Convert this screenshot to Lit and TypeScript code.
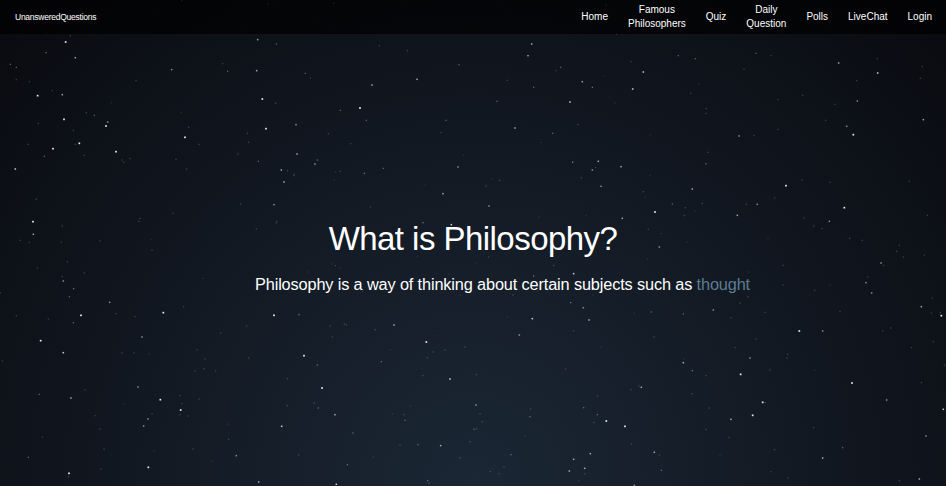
import { LitElement, html, svg, css } from "lit";
import { customElement } from "lit/decorators.js";

// Star clusters: [offsetX, offsetY, [x, y, brightness 1-9, ...]] with coordinates in thirds of a pixel.
const FIELD: [number, number, number[]][] = [
  [0, 0, [545,2,3,803,11,4,829,12,1,459,41,1,665,92,1,671,98,1,142,98,1,724,96,1,211,107,2,197,126,9,138,158,4,226,173,6,31,193,3,49,202,3,49,239,2,88,245,2,157,272,2,113,287,9,187,284,6,334,308,1,192,358,9,259,338,2,283,346,3,115,370,2,323,366,5,318,378,8,220,391,2,238,430,9,226,433,2,85,433,2,159,446,8,133,469,3,253,466,2,348,455,9,366,480,2,372,487,2,390,476,2,528,478,2,515,209,5,408,242,2,668,191,2,683,214,3,770,212,6,773,119,6,829,132,3,916,220,3,931,234,2,787,297,9,827,310,2,543,338,1,566,382,2,555,412,9,597,433,2,798,386,8,742,400,2,746,427,2,888,374,5,891,462,6,713,462,2,775,484,3,945,492,5,952,480,2,787,2,1]],
  [315, 0, [57,10,4,271,17,1,14,50,1,40,86,1,363,92,1,575,35,1,553,4,1,873,15,4,904,102,2,650,132,6,639,167,6,193,137,2,277,152,2,432,194,3,737,202,3,723,212,2,577,241,2,656,262,3,802,245,6,832,262,4,867,228,1,948,185,1,306,238,6,171,255,6,135,324,9,76,331,3,154,361,3,546,304,3,765,306,7,900,309,1,393,361,3,378,398,2,600,384,6,713,400,3,789,374,2,678,428,1,40,401,2,107,431,2,445,466,1,7,480,2,773,487,3,850,484,5]],
  [630, 0, [211,18,1,613,78,1,594,80,1,145,167,3,196,176,3,378,160,3,423,167,2,342,208,2,3,185,1,40,216,7,8,267,7,207,251,1,182,280,2,626,189,6,742,176,2,743,219,7,680,242,2,877,200,2,871,235,2,518,286,2,444,299,2,615,313,2,682,303,5,229,326,2,228,340,2,587,361,2,650,379,5,670,404,9,880,359,6,444,388,2,327,408,5,372,406,2,60,404,1,235,457,2,228,491,2]],
  [0, 160, [46,27,7,560,27,2,109,118,2,99,185,9,100,223,6,187,198,2,61,241,2,88,247,2,184,246,2,300,243,2,420,175,2,417,184,2,519,160,2,722,132,2,822,134,5,844,30,6,862,32,2,883,43,2,881,47,2,852,66,6,831,184,2,829,189,2,769,207,2,453,238,1,456,270,2,202,305,2,112,324,2,187,350,2,190,363,5,253,339,2,221,386,4,208,410,3,1,399,2,608,355,1,925,336,1,49,467,2,145,477,2,243,466,8,220,488,2,329,427,5,348,461,2,405,470,2,490,458,9,551,440,2,822,466,8,897,464,4]],
  [315, 160, [61,37,1,76,34,2,58,61,1,148,40,4,205,25,3,429,21,5,331,76,1,384,101,6,166,141,2,531,56,1,554,61,2,513,78,2,522,138,5,324,188,4,145,195,2,409,194,7,799,53,2,832,30,5,842,23,2,850,4,3,773,6,2,918,20,6,858,79,5,922,175,6,813,166,1,672,171,1,292,235,1,307,289,1,521,291,2,484,308,1,49,312,1,61,317,2,76,323,1,402,342,1,656,348,4,776,341,7,716,316,2,594,405,2,668,393,1,834,405,1,436,405,1,142,395,1,767,428,4,805,443,5,822,480,6,652,476,7,576,471,1]],
  [630, 160, [228,12,2,60,46,1,40,95,2,46,112,1,187,87,6,127,132,3,217,130,2,166,143,2,195,153,1,163,167,2,75,156,8,55,208,2,94,221,1,88,261,5,171,246,1,53,297,1,322,166,6,349,133,2,382,133,5,434,114,2,468,77,8,516,60,2,600,67,2,838,64,2,522,174,2,551,198,2,576,206,2,598,184,5,643,143,9,892,166,2,414,234,1,659,235,2,697,241,2,459,316,2,808,256,2,800,274,2,820,291,2,883,285,2,753,309,5,761,316,2,713,351,2,708,368,5,725,399,5,459,375,2,554,391,2,600,376,1,357,336,1,354,410,2,330,429,2,250,450,5,64,456,3,12,460,1,160,462,3,303,473,2,405,457,2,630,454,2,874,440,6,907,414,2,904,459,2,934,467,9,931,458,2]],
  [0, 321, [220,6,2,122,59,9,190,95,7,7,120,2,366,96,2,402,96,2,447,99,1,426,48,5,740,15,2,662,36,2,591,87,2,615,114,2,612,143,2,585,150,2,647,150,2,746,111,2,912,104,9,862,173,2,952,132,2,118,220,3,255,207,2,213,231,6,414,198,5,481,236,9,372,249,1,540,224,2,546,248,2,597,234,2,542,267,8,456,278,2,540,281,2,564,285,2,444,294,5,431,315,5,285,284,2,300,324,2,862,254,2,943,246,2,955,261,2,845,316,7,686,309,1,127,348,2,312,384,2,85,409,3,686,355,2,579,384,2,462,390,1,709,404,5,896,402,2,636,420,1,207,457,9,205,468,2,303,444,2,445,439,9,776,483,6]],
  [315, 321, [46,15,2,88,9,2,94,12,2,181,26,2,237,12,6,52,48,2,359,45,1,334,63,8,226,87,1,355,93,2,390,87,2,450,78,2,337,110,2,199,122,3,7,132,2,613,42,5,776,30,2,858,78,1,324,164,2,484,161,2,405,174,7,752,144,2,21,201,8,483,252,5,286,255,1,10,261,2,233,279,1,267,281,2,60,281,6,270,298,3,495,278,2,502,302,2,484,323,2,477,325,3,114,336,3,255,372,2,309,371,3,377,374,6,465,362,2,435,411,2,175,408,1,97,431,3,526,452,2,567,438,2,552,458,2,588,401,3,630,345,1,647,264,2,645,287,3,847,225,2,806,260,3,847,281,3,837,305,2,874,300,8,930,316,8,826,398,6,776,415,6,809,442,6,763,450,6,810,459,2,792,479,1,338,479,3,342,486,2,64,490,7]],
  [630, 321, [72,48,2,162,114,1,160,125,6,187,149,4,315,80,2,378,54,2,360,111,5,420,147,2,473,100,2,471,111,2,508,30,8,578,30,5,758,30,2,782,21,2,844,80,2,910,62,2,943,132,2,228,164,2,332,160,8,27,195,2,34,199,6,3,206,2,186,218,2,554,147,1,666,186,8,874,185,2,770,237,5,238,261,2,398,244,9,406,245,2,368,283,9,303,295,6,228,325,2,297,349,2,551,320,2,940,265,7,888,345,5,73,394,6,88,402,2,94,448,3,4,369,2,270,402,1,434,386,2,638,380,3,578,411,6,423,452,2,474,471,2,868,474,6,808,479,2,13,493,5]],
];

const STARS = FIELD.flatMap(([ox, oy, pts]) => {
  const out: { x: number; y: number; b: number }[] = [];
  for (let i = 0; i < pts.length; i += 3) {
    out.push({ x: ox + pts[i] / 3, y: oy + pts[i + 1] / 3, b: pts[i + 2] });
  }
  return out;
});

@customElement("star-field")
export class StarField extends LitElement {
  static styles = css`
    :host { display: block; }
    svg { display: block; width: 946px; height: 486px; }
    .star { fill: #fff; }
  `;
  render() {
    return html`<svg viewBox="0 0 946 486" aria-hidden="true">
      ${STARS.map(({ x, y, b }) => {
        const s = b > 7 ? 1.7 : b > 4 ? 1.5 : 1.2;
        const o = b > 7 ? 0.92 : [0, 0.12, 0.22, 0.36, 0.45, 0.5, 0.62, 0.8][b];
        return svg`<rect class="star" x=${x - s / 2} y=${y - s / 2} width=${s} height=${s} opacity=${o}></rect>`;
      })}
    </svg>`;
  }
}

@customElement("app-root")
export class AppRoot extends LitElement {
  static styles = css`
    :host {
      display: block;
      position: relative;
      height: 486px;
      overflow: hidden;
      color: #fff;
      font-family: "Liberation Sans", Arial, sans-serif;
      background: radial-gradient(ellipse at bottom, #1b2735 0%, #090a0f 100%);
    }
    star-field { position: absolute; inset: 0; }
    .page { position: relative; display: flex; flex-direction: column; height: 100%; }
    nav {
      display: flex;
      align-items: center;
      justify-content: space-between;
      box-sizing: border-box;
      height: 34px;
      padding: 0 14px 0 15px;
      background: rgba(0, 0, 0, 0.7);
    }
    .brand { font-size: 8.5px; line-height: 10px; letter-spacing: -0.25px; }
    .links { display: flex; align-items: center; gap: 20px; }
    .link { font-size: 10px; line-height: 14px; text-align: center; }
    .hero { display: flex; flex-direction: column; align-items: center; padding-top: 185px; }
    h1 { margin: 0; font-size: 33px; line-height: 40px; font-weight: 400; letter-spacing: -0.54px; }
    p { margin: 15px 0 0 59px; font-size: 16.3px; line-height: 20px; letter-spacing: -0.13px; white-space: nowrap; }
    .word { color: #5d7d92; }
  `;
  render() {
    const links = [["Home"], ["Famous", "Philosophers"], ["Quiz"], ["Daily", "Question"], ["Polls"], ["LiveChat"], ["Login"]];
    return html`
      <star-field></star-field>
      <div class="page">
        <nav>
          <div class="brand">UnansweredQuestions</div>
          <div class="links">
            ${links.map((lines) => html`<div class="link">${lines.map((l) => html`<div>${l}</div>`)}</div>`)}
          </div>
        </nav>
        <div class="hero">
          <h1>What is Philosophy?</h1>
          <p>Philosophy is a way of thinking about certain subjects such as <span class="word">thought</span></p>
        </div>
      </div>
    `;
  }
}
